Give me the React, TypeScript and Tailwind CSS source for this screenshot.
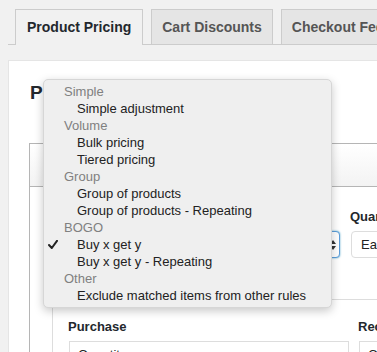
import type { ReactNode } from 'react'

type Row = { label: string; group?: boolean; checked?: boolean }

const rows: Row[] = [
  { label: 'Simple', group: true },
  { label: 'Simple adjustment' },
  { label: 'Volume', group: true },
  { label: 'Bulk pricing' },
  { label: 'Tiered pricing' },
  { label: 'Group', group: true },
  { label: 'Group of products' },
  { label: 'Group of products - Repeating' },
  { label: 'BOGO', group: true },
  { label: 'Buy x get y', checked: true },
  { label: 'Buy x get y - Repeating' },
  { label: 'Other', group: true },
  { label: 'Exclude matched items from other rules' },
]

function Tab({ children, active }: { children: ReactNode; active?: boolean }) {
  return (
    <div
      className={
        active
          ? 'h-[36px] shrink-0 -mb-px border border-b-0 border-[#ccc] bg-[#f1f1f1] px-[11px] leading-[34px] text-[14px] font-bold text-[#23282d] whitespace-nowrap'
          : 'h-[35px] shrink-0 border border-b-0 border-[#ccc] bg-[#e5e5e5] px-[10px] leading-[34px] text-[14px] font-bold text-[#555] whitespace-nowrap'
      }
    >
      {children}
    </div>
  )
}

function Arrows() {
  return (
    <svg width="6" height="10" viewBox="0 0 6 10" className="absolute right-[3px] top-[8px]">
      <path d="M3 0 L6 4 L0 4 Z" fill="#333" />
      <path d="M3 10 L6 6 L0 6 Z" fill="#333" />
    </svg>
  )
}

function Dropdown() {
  return (
    <div className="absolute left-[43px] top-[79px] w-[289px] rounded-[5px] border border-[#d6d6d6] bg-[#efefef] py-[3px] shadow-[0_3px_10px_rgba(0,0,0,0.22)]">
      {rows.map((r) => (
        <div
          key={r.label}
          className={
            r.group
              ? 'relative h-[17px] pl-[20px] leading-[17px] text-[13px] text-[#808080]'
              : 'relative h-[17px] pl-[33px] leading-[17px] text-[13px] text-[#222]'
          }
        >
          {r.checked && (
            <svg width="10" height="9" viewBox="0 0 10 9" className="absolute left-[4px] top-[4px]">
              <path d="M1 5 L3.8 8 L9 0.8" fill="none" stroke="#222" strokeWidth="2" strokeLinecap="round" strokeLinejoin="round" />
            </svg>
          )}
          {r.label}
        </div>
      ))}
    </div>
  )
}

export default function App() {
  return (
    <div className="relative h-[352px] w-[377px] overflow-hidden bg-[#f1f1f1] pl-[8px] pt-[9px] font-['Liberation_Sans',Arial,sans-serif]">
      <div className="flex w-[600px] gap-[8px] border-b border-[#ccc] pl-[7px]">
        <Tab active>Product Pricing</Tab>
        <Tab>Cart Discounts</Tab>
        <Tab>Checkout Fees</Tab>
      </div>

      <div className="mt-[15px] w-[700px] border border-[#e5e5e5] bg-white px-[20px] pt-[20px]">
        <h2 className="h-[23px] pl-px text-[19px] font-bold leading-[23px] text-[#23282d]">Product Pricing Rules</h2>

        <div className="mt-[39px] border border-[#b5b5b5]">
          <div className="flex h-[43px] items-center border-b border-[#b5b5b5] bg-gradient-to-b from-white to-[#f3f3f3] pl-[12px]">
            <span className="text-[12px] text-[#bbb]">⋮</span>
          </div>
          <div className="pl-[22px] pt-[22px]">
            <div className="flex gap-[10px]">
              <div className="w-[288px] shrink-0">
                <div className="h-[16px] text-[13px] font-bold leading-[16px] text-[#23282d]">Rule type</div>
                <div className="relative mt-[6px] h-[27px] rounded-[4px] border border-[#5b9dd9] bg-white shadow-[0_0_2px_rgba(30,140,190,0.8)]">
                  <span className="pl-[9px] text-[13px] leading-[25px] text-[#222]">Buy x get y</span>
                  <Arrows />
                </div>
              </div>
              <div className="w-[200px] shrink-0">
                <div className="h-[16px] whitespace-nowrap text-[13px] font-bold leading-[16px] text-[#23282d]">Quantities based on</div>
                <div className="mt-[6px] ml-px h-[27px] whitespace-nowrap rounded-[4px] border border-[#ddd] bg-white pl-[9px] text-[13px] leading-[25px] text-[#222]">
                  Each individual product
                </div>
              </div>
            </div>

            <div className="mt-[41px] border-l border-t border-[#ddd] pl-[15px] pt-[19px]">
              <div className="flex gap-[9px]">
                <div className="w-[281px] shrink-0">
                  <div className="h-[16px] text-[13px] font-bold leading-[16px] text-[#23282d]">Purchase</div>
                  <div className="mt-[6px] ml-px h-[28px] border border-[#ddd] bg-white pl-[8px] text-[13px] leading-[26px] text-[#222]">Quantity</div>
                </div>
                <div className="w-[200px] shrink-0">
                  <div className="h-[16px] text-[13px] font-bold leading-[16px] text-[#23282d]">Receive</div>
                  <div className="mt-[6px] ml-px h-[28px] border border-[#ddd] bg-white pl-[8px] text-[13px] leading-[26px] text-[#222]">Quantity</div>
                </div>
              </div>
            </div>
          </div>
        </div>
      </div>

      <Dropdown />
    </div>
  )
}
